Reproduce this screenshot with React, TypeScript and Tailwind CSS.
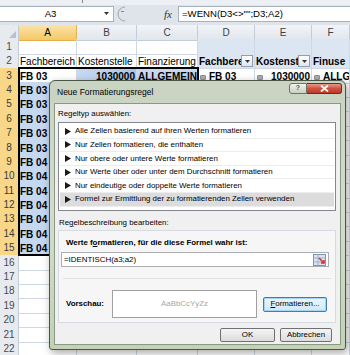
import React from 'react'

const rules = [
  'Alle Zellen basierend auf ihren Werten formatieren',
  'Nur Zellen formatieren, die enthalten',
  'Nur obere oder untere Werte formatieren',
  'Nur Werte über oder unter dem Durchschnitt formatieren',
  'Nur eindeutige oder doppelte Werte formatieren',
  'Formel zur Ermittlung der zu formatierenden Zellen verwenden',
]

const gridCols = 'grid grid-cols-[19px_58px_60px_61px_57px_57px_38px]'

const Cell = ({
  children,
  className = '',
}: {
  children?: React.ReactNode
  className?: string
}) => (
  <div
    className={`h-full border-r border-b border-[#d0d7e5] overflow-hidden whitespace-nowrap flex items-end px-[1px] leading-[12px] ${className}`}
  >
    {children}
  </div>
)

const RowHead = ({ n, sel }: { n: number; sel?: boolean }) => (
  <div
    className={`h-full flex items-center justify-center text-[10px] font-normal border-r border-b ${
      sel
        ? 'bg-[#f8d788] border-[#e9bb5d] text-[#3b3b3b]'
        : 'bg-[#e7ebf0] border-[#c3ccd8] text-[#4a4a4a]'
    }`}
  >
    {n}
  </div>
)

const FilterBtn = () => (
  <span className="ml-auto mb-[1px] w-[12px] h-[12px] shrink-0 border border-[#8fa0b6] bg-gradient-to-b from-white to-[#dfe5ee] flex items-center justify-center">
    <svg width="5" height="3" viewBox="0 0 5 3">
      <polygon points="0,0 5,0 2.5,3" fill="#333" />
    </svg>
  </span>
)

const Minus = () => (
  <span className="w-[6px] h-[5px] mb-[3px] mr-[3px] ml-[1px] shrink-0 rounded-[1px] bg-[#a9adb3] border border-[#8c9096]" />
)

const WinBtn = ({
  children,
  className = '',
}: {
  children: React.ReactNode
  className?: string
}) => (
  <div
    className={`h-[14px] flex items-center justify-center rounded-[2px] border border-[#707070] bg-gradient-to-b from-[#f4f4f4] to-[#dcdcdc] ${className}`}
  >
    {children}
  </div>
)

export default function App() {
  const dataRows = Array.from({ length: 19 }, (_, i) => i + 4)

  return (
    <div className="relative w-[350px] h-[355px] overflow-hidden bg-white font-['Liberation_Sans',sans-serif] text-black">
      {/* formula bar */}
      <div className="h-[25px] bg-[#dfe4eb] flex flex-col">
        <div className="h-[5px] bg-[#eceff3] relative">
          <span className="absolute left-[82px] top-0 w-[1px] h-[3px] bg-[#888]" />
        </div>
        <div className="flex items-center h-[18px]">
          <div className="w-[114px] h-[16px] bg-white border border-l-0 border-[#a9b3c0] flex items-center text-[9.6px]">
            <span className="flex-1 text-center">A3</span>
            <svg width="12" height="4" viewBox="0 0 12 4">
              <polygon points="3,0 8,0 5.5,3" fill="#333" />
            </svg>
          </div>
          <svg width="12" height="16" viewBox="0 0 12 16" className="ml-[1px]">
            <path d="M10 1 A7 7 0 0 0 10 15" fill="none" stroke="#9aa5b3" />
            <line x1="6" y1="5.5" x2="9" y2="5.5" stroke="#7f8a99" />
          </svg>
          <span className="ml-[37px] w-[14px] font-['Liberation_Serif',serif] italic text-[11px] text-[#333]">
            fx
          </span>
          <div className="flex-1 h-[16px] bg-white border border-r-0 border-[#a9b3c0] flex items-center pl-[3px] text-[9.6px] whitespace-nowrap">
            =WENN(D3&lt;&gt;"";D3;A2)
          </div>
        </div>
      </div>

      {/* column headers */}
      <div className={`${gridCols} h-[13.8px] text-[10px]`}>
        <div className="h-full bg-[#e7ebf0] border-r border-b border-[#c3ccd8] flex items-end justify-end p-[2px]">
          <svg width="7" height="7" viewBox="0 0 7 7">
            <polygon points="7,0 7,7 0,7" fill="#b9c1cc" />
          </svg>
        </div>
        <div className="h-full bg-gradient-to-b from-[#fbe3a8] to-[#f4c965] border-r border-b border-[#e4b04c] flex items-center justify-center">
          A
        </div>
        {['B', 'C', 'D', 'E', 'F'].map((c) => (
          <div
            key={c}
            className="h-full bg-gradient-to-b from-[#f1f4f8] to-[#e1e6ed] border-r border-b border-[#c3ccd8] flex items-center justify-center text-[#3f3f3f]"
          >
            {c}
          </div>
        ))}
      </div>

      {/* rows */}
      <div className="text-[10px]">
        <div className={`${gridCols} h-[14.4px]`}>
          <RowHead n={1} />
          <Cell />
          <Cell />
          <Cell />
          <Cell className="bg-[#dce6f2]" />
          <Cell className="bg-[#dce6f2]" />
          <Cell className="bg-[#dce6f2]" />
        </div>
        <div className={`${gridCols} h-[14.4px]`}>
          <RowHead n={2} />
          <Cell>Fachbereich</Cell>
          <Cell>Kostenstelle</Cell>
          <Cell>Finanzierung</Cell>
          <Cell className="bg-[#dce6f2] font-bold">
            <span className="overflow-hidden">Fachbereich</span>
            <FilterBtn />
          </Cell>
          <Cell className="bg-[#dce6f2] font-bold">
            <span className="overflow-hidden">Kostenstelle</span>
            <FilterBtn />
          </Cell>
          <Cell className="bg-[#dce6f2] font-bold">Finuse</Cell>
        </div>
        <div className={`${gridCols} h-[14.4px] font-bold`}>
          <RowHead n={3} sel />
          <Cell className="bg-white">FB 03</Cell>
          <Cell className="bg-gradient-to-r from-[#c9daf1] to-[#a9c3e9] justify-end">
            1030000
          </Cell>
          <Cell className="bg-[#c6d8f0]">ALLGEMEIN</Cell>
          <Cell>
            <Minus />
            FB 03
          </Cell>
          <Cell>
            <Minus />
            <span className="ml-auto">1030000</span>
          </Cell>
          <Cell>
            <Minus />
            ALLGEMEIN
          </Cell>
        </div>
        {dataRows.map((n) => {
          const sel = n <= 15
          return (
            <div key={n} className={`${gridCols} h-[14.4px] font-bold`}>
              <RowHead n={n} sel={sel} />
              <Cell className={sel ? 'bg-[#c6d8f0]' : ''}>
                {sel ? (n <= 8 ? 'FB 03' : 'FB 04') : ''}
              </Cell>
              <Cell className={sel ? 'bg-[#c6d8f0]' : ''} />
              <Cell className={sel ? 'bg-[#c6d8f0]' : ''} />
              <Cell />
              <Cell />
              <Cell />
            </div>
          )
        })}
      </div>

      {/* selection border */}
      <div className="absolute left-[18px] top-[66.6px] w-[181px] h-[189.2px] border-2 border-black pointer-events-none" />

      {/* dialog */}
      <div className="absolute left-[49px] top-[80px] w-[297px] h-[270px] rounded-t-[6px] rounded-b-[3px] border border-[#4b5647] bg-gradient-to-b from-[#c9d3c2] via-[#d3dccb] to-[#c2d2b3] shadow-[2px_3px_8px_rgba(0,0,0,0.35)] flex flex-col text-[7.9px]">
        <div className="h-[22px] flex items-start">
          <span className="pl-[7px] pt-[5px] text-[8.5px] text-black">
            Neue Formatierungsregel
          </span>
          <div className="ml-auto mr-[3px] mt-[2px] flex">
            <div className="w-[18px] h-[11px] rounded-l-[3px] border border-[#6b7468] bg-gradient-to-b from-[#f1f3ef] to-[#c9d0c4] flex items-center justify-center text-[7px] font-bold text-[#555]">
              ?
            </div>
            <div className="w-[35px] h-[11px] rounded-r-[3px] border border-l-0 border-[#6e2a22] bg-gradient-to-b from-[#e39a8c] via-[#cf5241] to-[#c0392b] flex items-center justify-center">
              <svg width="9" height="7" viewBox="0 0 9 7">
                <path d="M1 0.5 L8 6.5 M8 0.5 L1 6.5" stroke="white" strokeWidth="1.8" />
              </svg>
            </div>
          </div>
        </div>

        <div className="mx-[4px] mb-[4px] flex-1 border border-[#8b9885] bg-[#f0f0f0] flex flex-col">
          <div className="mt-[5px] ml-[3px] h-[10px] leading-[10px]">Regeltyp auswählen:</div>
          <div className="mt-[3px] ml-[3px] w-[278px] h-[89px] border border-[#828790] bg-white p-[1px] pt-[2px]">
            {rules.map((r, i) => (
              <div
                key={r}
                className={`h-[13.6px] flex items-center pl-[5px] gap-[4px] border-b border-[#ededed] whitespace-nowrap ${
                  i === 5 ? 'bg-[#dcdcdc]' : ''
                }`}
              >
                <svg width="6" height="7" viewBox="0 0 6 7">
                  <polygon points="0,0 6,3.5 0,7" fill="#1a1a1a" />
                </svg>
                {r}
              </div>
            ))}
          </div>

          <div className="mt-[7px] ml-[4px] h-[10px] leading-[10px]">
            Re<span className="underline">g</span>elbeschreibung bearbeiten:
          </div>
          <div className="mt-[2px] ml-[3px] w-[278px] h-[93px] border border-[#d5dbe1] bg-[#f6f6f6] flex flex-col">
            <div className="mt-[7px] ml-[7px] h-[10px] leading-[10px] font-bold whitespace-nowrap">
              Werte f<span className="underline">o</span>rmatieren, für die diese Formel wahr ist:
            </div>
            <div className="mt-[4px] ml-[2px] w-[268px] h-[15px] bg-white border border-[#abadb3] flex items-center pl-[2px]">
              <span className="flex-1">=IDENTISCH(a3;a2)</span>
              <svg width="13" height="12" viewBox="0 0 13 12" className="mr-[2px]">
                <rect x="0.5" y="0.5" width="12" height="11" fill="#d9e4f2" stroke="#7d93b2" />
                <line x1="0.5" y1="4" x2="12.5" y2="4" stroke="#9fb2cc" />
                <line x1="0.5" y1="8" x2="12.5" y2="8" stroke="#9fb2cc" />
                <line x1="5" y1="0.5" x2="5" y2="11.5" stroke="#9fb2cc" />
                <path d="M6 4 L11 9 M8 9 L11 9 L11 6" stroke="#d4332a" strokeWidth="1.6" fill="none" />
              </svg>
            </div>
            <div className="mt-[11px] ml-[4px] w-[268px] h-[1px] bg-[#dde1e5]" />
            <div className="mt-[11px] flex items-center">
              <span className="ml-[7px] w-[46px] font-bold">Vorschau:</span>
              <div className="w-[145px] h-[28px] border border-[#a0a0a0] bg-white flex items-center justify-center text-[#a6a6a6]">
                AaBbCcYyZz
              </div>
              <div className="ml-[6px] w-[64px] h-[15px] rounded-[2px] border border-[#3c7fb1] bg-gradient-to-b from-[#eaf6fd] to-[#cfe8f8] flex items-center justify-center shadow-[inset_0_0_0_1px_#a7d3f1]">
                <span className="underline">F</span>ormatieren...
              </div>
            </div>
          </div>

          <div className="mt-[5px] pr-[8px] flex justify-end gap-[5px]">
            <WinBtn className="w-[55px]">OK</WinBtn>
            <WinBtn className="w-[52px]">Abbrechen</WinBtn>
          </div>
        </div>
      </div>
    </div>
  )
}
